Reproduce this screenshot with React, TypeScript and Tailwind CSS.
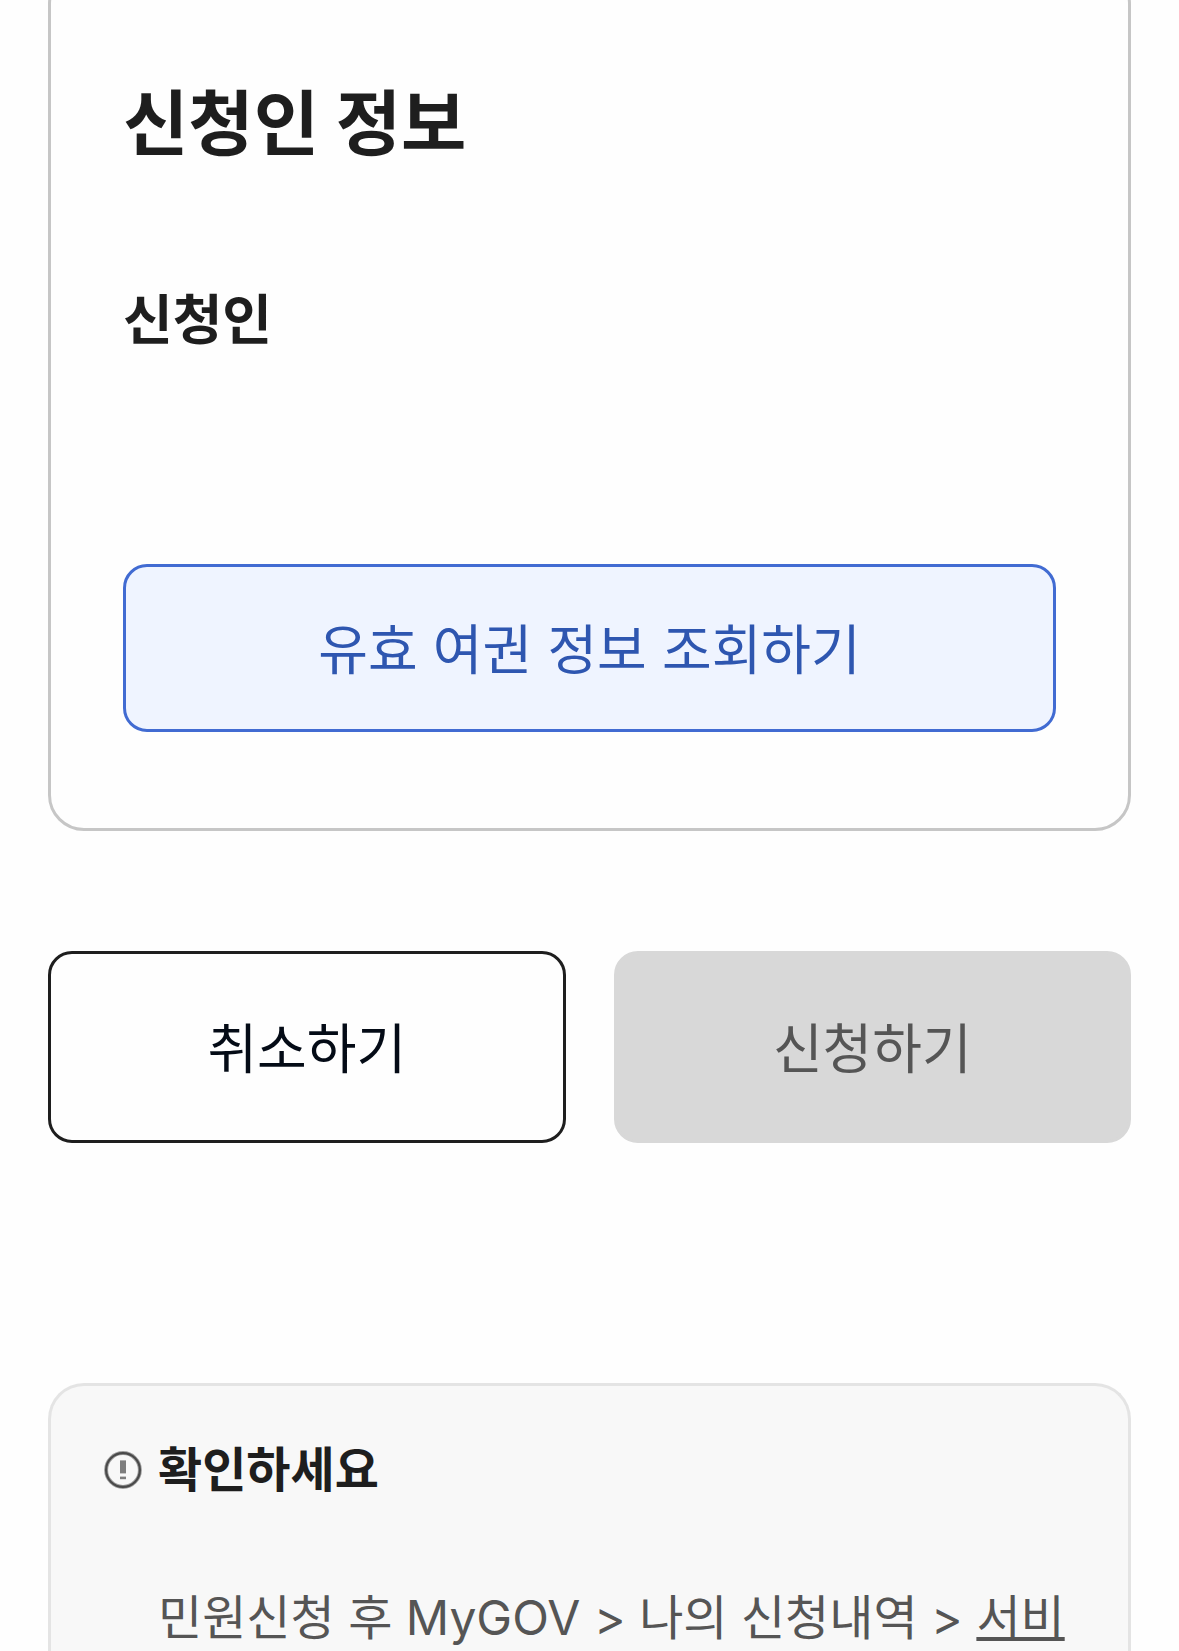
import type { ReactNode } from 'react';
import { clsx } from 'clsx';

interface ActionButtonProps {
  children: ReactNode;
  className?: string;
  disabled?: boolean;
}

function ActionButton({ children, className, disabled }: ActionButtonProps) {
  return (
    <button
      type="button"
      disabled={disabled}
      className={clsx('rounded-3xl border-[3px] text-center text-[54px] leading-[72px]', className)}
    >
      {children}
    </button>
  );
}

function NoticeIcon() {
  return (
    <svg viewBox="0 0 38 38" className="h-[38px] w-[38px] shrink-0" fill="none" aria-hidden="true">
      <circle cx="19" cy="19" r="16.9" stroke="#a0a0a0" strokeWidth="4" />
      <circle cx="19" cy="19" r="16.9" stroke="#4a4a4a" strokeWidth="2.2" />
      <rect x="16" y="9.4" width="6" height="13" fill="#7d7d7d" />
      <rect x="16" y="25.6" width="6" height="2.6" fill="#7d7d7d" />
    </svg>
  );
}

export default function App() {
  return (
    <main className="flex h-screen flex-col overflow-hidden bg-[#fefefe] px-12 font-['Inter','Noto_Sans_CJK_KR',sans-serif] text-[#1e1e1e] [font-feature-settings:'calt'_0]">
      <section className="-mt-8 shrink-0 rounded-[36px] border-[3px] border-[#c6c6c6] px-[72px] pt-[98px] pb-24">
        <h2 className="text-[71px] leading-[108px] font-bold">신청인 정보</h2>
        <h3 className="mt-[104px] text-[54px] leading-[80px] font-bold">신청인</h3>
        <ActionButton className="mt-[203px] w-full border-[#416bd2] bg-[#eff4ff] pt-12 pb-[42px] text-[#2e56b0]">
          유효 여권 정보 조회하기
        </ActionButton>
      </section>

      <div className="mt-[120px] grid shrink-0 grid-cols-2 gap-12">
        <ActionButton className="border-[#1e1e1e] pt-[60px] pb-[54px] text-[#040b16]">취소하기</ActionButton>
        <ActionButton disabled className="border-[#d8d8d8] bg-[#d8d8d8] pt-[60px] pb-[54px] text-[#555555]">
          신청하기
        </ActionButton>
      </div>

      <section className="mt-60 flex-1 rounded-t-[36px] border-[3px] border-b-0 border-[#e4e4e4] bg-[#f8f8f8] px-[53px] pt-12">
        <div className="flex items-center gap-4">
          <NoticeIcon />
          <h4 className="text-[48px] leading-[72px] font-bold">확인하세요</h4>
        </div>
        <p className="mt-[76px] pl-[54px] text-[48px] leading-[72px] whitespace-nowrap text-[#555555]">
          민원신청 후 MyGOV &gt; 나의 신청내역 &gt;{' '}
          <a href="#" className="underline decoration-4 underline-offset-2">
            서비
          </a>
        </p>
      </section>
    </main>
  );
}
